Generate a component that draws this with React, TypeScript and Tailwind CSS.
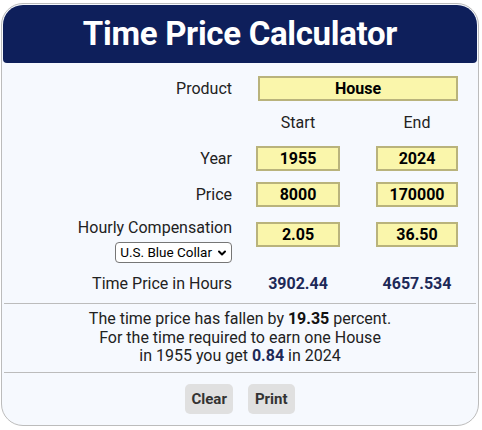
import { ChevronDown } from "lucide-react";

const field =
  "h-[25px] border-2 border-[#b9b37c] bg-[#faf6ab] text-center text-[16px] font-bold leading-[21px] text-black";

function Row({ label, children, className = "" }: { label: React.ReactNode; children?: React.ReactNode; className?: string }) {
  return (
    <>
      <div className={`text-right text-[16px] text-[#222] ${className}`}>{label}</div>
      {children}
    </>
  );
}

export default function App() {
  return (
    <div className="min-h-[430px] bg-white pt-[3px] pl-[1px] font-['Roboto',sans-serif]">
      <div className="h-[423px] w-[478px] rounded-[22px] border border-[#bcbcbc] bg-[#f6f9fe] p-px">
        {/* Header */}
        <div className="flex h-[58px] items-center justify-center rounded-t-[20px] rounded-b-[4px] bg-[#0e1f5b]">
          <h1 className="text-[33px] font-bold tracking-[-0.3px] text-white">Time Price Calculator</h1>
        </div>

        {/* Inputs */}
        <div className="mt-[13px] grid grid-cols-[1fr_84px_94px] items-center gap-x-[24px] pr-[19px]">
          <Row label="Product">
            <div className={`${field} col-span-2 ml-[2px]`}>House</div>
          </Row>

          <div className="col-start-2 mt-[10px] text-center text-[16px] text-[#222]">Start</div>
          <div className="mt-[10px] ml-[12px] text-center text-[16px] text-[#222]">End</div>

          <Row label="Year" className="mt-[11px]">
            <div className={`${field} mt-[11px]`}>1955</div>
            <div className={`${field} mt-[11px] ml-[12px]`}>2024</div>
          </Row>

          <Row label="Price" className="mt-[11px]">
            <div className={`${field} mt-[11px]`}>8000</div>
            <div className={`${field} mt-[11px] ml-[12px]`}>170000</div>
          </Row>

          <div className="mt-[11px] flex flex-col items-end">
            <span className="text-[16px] leading-[20px] text-[#222]">Hourly Compensation</span>
            <div className="mt-[4px] flex h-[21px] items-center gap-[4px] rounded-[4px] border border-[#767676] bg-white pl-[4px] pr-[3px] text-[13.5px] text-black">
              U.S. Blue Collar
              <ChevronDown className="size-[12px]" strokeWidth={4} />
            </div>
          </div>
          <div className={`${field} -mt-[2px]`}>2.05</div>
          <div className={`${field} -mt-[2px] ml-[12px]`}>36.50</div>

          <Row label="Time Price in Hours" className="mt-[9px]">
            <div className="mt-[9px] text-center text-[16px] font-bold text-[#1d2958]">3902.44</div>
            <div className="mt-[9px] ml-[12px] text-center text-[16px] font-bold text-[#1d2958]">4657.534</div>
          </Row>
        </div>

        {/* Summary */}
        <div className="mx-[1px] mt-[7px] border-y border-[#bcbcbc] pt-[6px] pb-[6px] text-center text-[16px] leading-[18.7px] text-[#222]">
          <p>
            The time price has fallen by <b className="text-[#111]">19.35</b> percent.
          </p>
          <p>For the time required to earn one House</p>
          <p>
            in 1955 you get <b className="text-[#1d2958]">0.84</b> in 2024
          </p>
        </div>

        {/* Actions */}
        <div className="mt-[11px] flex justify-center gap-[15px]">
          <button type="button" className="h-[30px] rounded-[5px] bg-[#e0e0e0] px-[6px] text-[15px] font-bold text-[#333]">
            Clear
          </button>
          <button type="button" className="h-[30px] rounded-[5px] bg-[#e0e0e0] px-[7px] text-[15px] font-bold text-[#333]">
            Print
          </button>
        </div>
      </div>
    </div>
  );
}
